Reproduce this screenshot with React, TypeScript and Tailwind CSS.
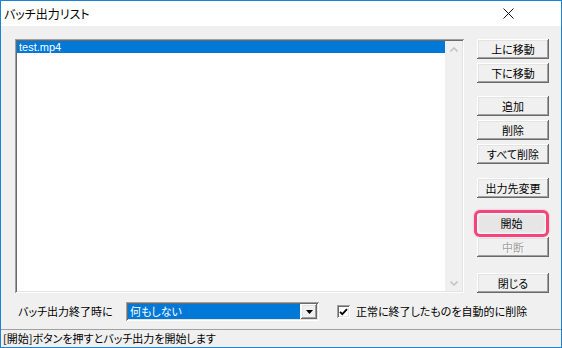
import React from "react";

const raised =
  "shadow-[inset_-1px_-1px_#696969,inset_1px_1px_#ffffff,inset_-2px_-2px_#a0a0a0,inset_2px_2px_#e3e3e3]";
const sunken =
  "shadow-[inset_1px_1px_#a0a0a0,inset_-1px_-1px_#ffffff,inset_2px_2px_#696969,inset_-2px_-2px_#e3e3e3]";

function Btn({ label, className = "", disabled = false }: { label: string; className?: string; disabled?: boolean }) {
  return (
    <div
      className={`h-[20px] w-[72px] shrink-0 flex items-center justify-center bg-[#f0f0f0] text-[11px] leading-none ${raised} ${
        disabled ? "text-[#a0a0a0] [text-shadow:1px_1px_0_#ffffff]" : "text-black"
      } ${className}`}
    >
      {label}
    </div>
  );
}

function Chevron({ up }: { up: boolean }) {
  return (
    <svg width="8" height="5" viewBox="0 0 8 5">
      <polyline
        points={up ? "0.5,4.5 4,1 7.5,4.5" : "0.5,0.5 4,4 7.5,0.5"}
        fill="none"
        stroke="#c4c4c4"
        strokeWidth="1.6"
      />
    </svg>
  );
}

export default function App() {
  return (
    <div
      className="w-[562px] h-[348px] border border-[#1883d7] flex flex-col bg-[#f0f0f0] overflow-hidden text-black [font-feature-settings:'palt']"
      style={{ fontFamily: '"Noto Sans CJK JP", "Noto Sans", sans-serif' }}
    >
      {/* Title bar */}
      <div className="h-[25px] shrink-0 bg-white flex items-center pl-[3px] pr-[47px]">
        <span className="text-[12px] leading-none">バッチ出力リスト</span>
        <svg className="ml-auto" width="11" height="11" viewBox="0 0 11 11">
          <path d="M0.5 0.5 L10.5 10.5 M10.5 0.5 L0.5 10.5" stroke="#111" strokeWidth="1" />
        </svg>
      </div>

      {/* Body */}
      <div className="flex-1 flex flex-col pt-[13px] pl-[14px] pr-[12px]">
        <div className="flex gap-[13px]">
          {/* List box */}
          <div className={`w-[449px] h-[254px] bg-white p-[2px] flex ${sunken}`}>
            <div className="flex-1 bg-white">
              <div
                className="h-[12px] bg-[#0078d7] text-white text-[11px] leading-[12px] pl-[2px]"
                style={{ fontFamily: '"Liberation Sans", Arial, sans-serif' }}
              >
                test.mp4
              </div>
            </div>
            <div className="w-[17px] bg-[#f0f0f0] flex flex-col justify-between">
              <div className="h-[16px] flex items-center justify-center">
                <Chevron up />
              </div>
              <div className="h-[16px] flex items-center justify-center">
                <Chevron up={false} />
              </div>
            </div>
          </div>

          {/* Buttons */}
          <div className="flex flex-col relative">
            <Btn label="上に移動" />
            <Btn label="下に移動" className="mt-[4px]" />
            <Btn label="追加" className="mt-[13px]" />
            <Btn label="削除" className="mt-[4px]" />
            <Btn label="すべて削除" className="mt-[4px]" />
            <Btn label="出力先変更" className="mt-[14px]" />
            <div className="mt-[15px] h-[20px] w-[72px] relative">
              <div className="absolute left-[-3px] top-[-3px] w-[75px] h-[27px] rounded-[6px] border-[3px] border-[#f2457c] bg-[#f4f4f4] shadow-[0_0_2px_#f7a3bf] p-[1px]">
                <div className="w-full h-full rounded-[4px] bg-[#e6e6e6] shadow-[inset_0_0_2px_#ffffff] flex items-center justify-center text-[11px] leading-none">
                  開始
                </div>
              </div>
            </div>
            <Btn label="中断" disabled className="mt-[4px]" />
            <Btn label="閉じる" className="mt-[16px]" />
          </div>
        </div>

        {/* Bottom row */}
        <div className="flex items-center mt-[9px] h-[19px]">
          <span className="w-[108px] ml-[3px] text-[11px] leading-none">バッチ出力終了時に</span>
          <div className={`w-[193px] h-[19px] p-[2px] bg-white flex ${sunken}`}>
            <div className="flex-1 bg-[#0078d7] text-white text-[11px] leading-[15px] pl-[2px] mr-[1px]">何もしない</div>
            <div className={`w-[16px] bg-[#f0f0f0] flex items-center justify-center ${raised}`}>
              <svg width="7" height="4" viewBox="0 0 7 4">
                <polygon points="0,0 7,0 3.5,4" fill="#000" />
              </svg>
            </div>
          </div>
          <div className={`ml-[18px] w-[13px] h-[13px] bg-white flex items-center justify-center ${sunken}`}>
            <svg width="9" height="8" viewBox="0 0 9 8">
              <polyline points="1,3.8 3.3,6.2 8,1.2" fill="none" stroke="#000" strokeWidth="1.8" />
            </svg>
          </div>
          <span className="ml-[6px] text-[11px] leading-none">正常に終了したものを自動的に削除</span>
        </div>
      </div>

      {/* Status bar */}
      <div className="h-[18px] shrink-0 border-t border-[#a0a0a0] flex items-center pl-[2px]">
        <span className="text-[11px] leading-none">[開始]ボタンを押すとバッチ出力を開始します</span>
      </div>
    </div>
  );
}
